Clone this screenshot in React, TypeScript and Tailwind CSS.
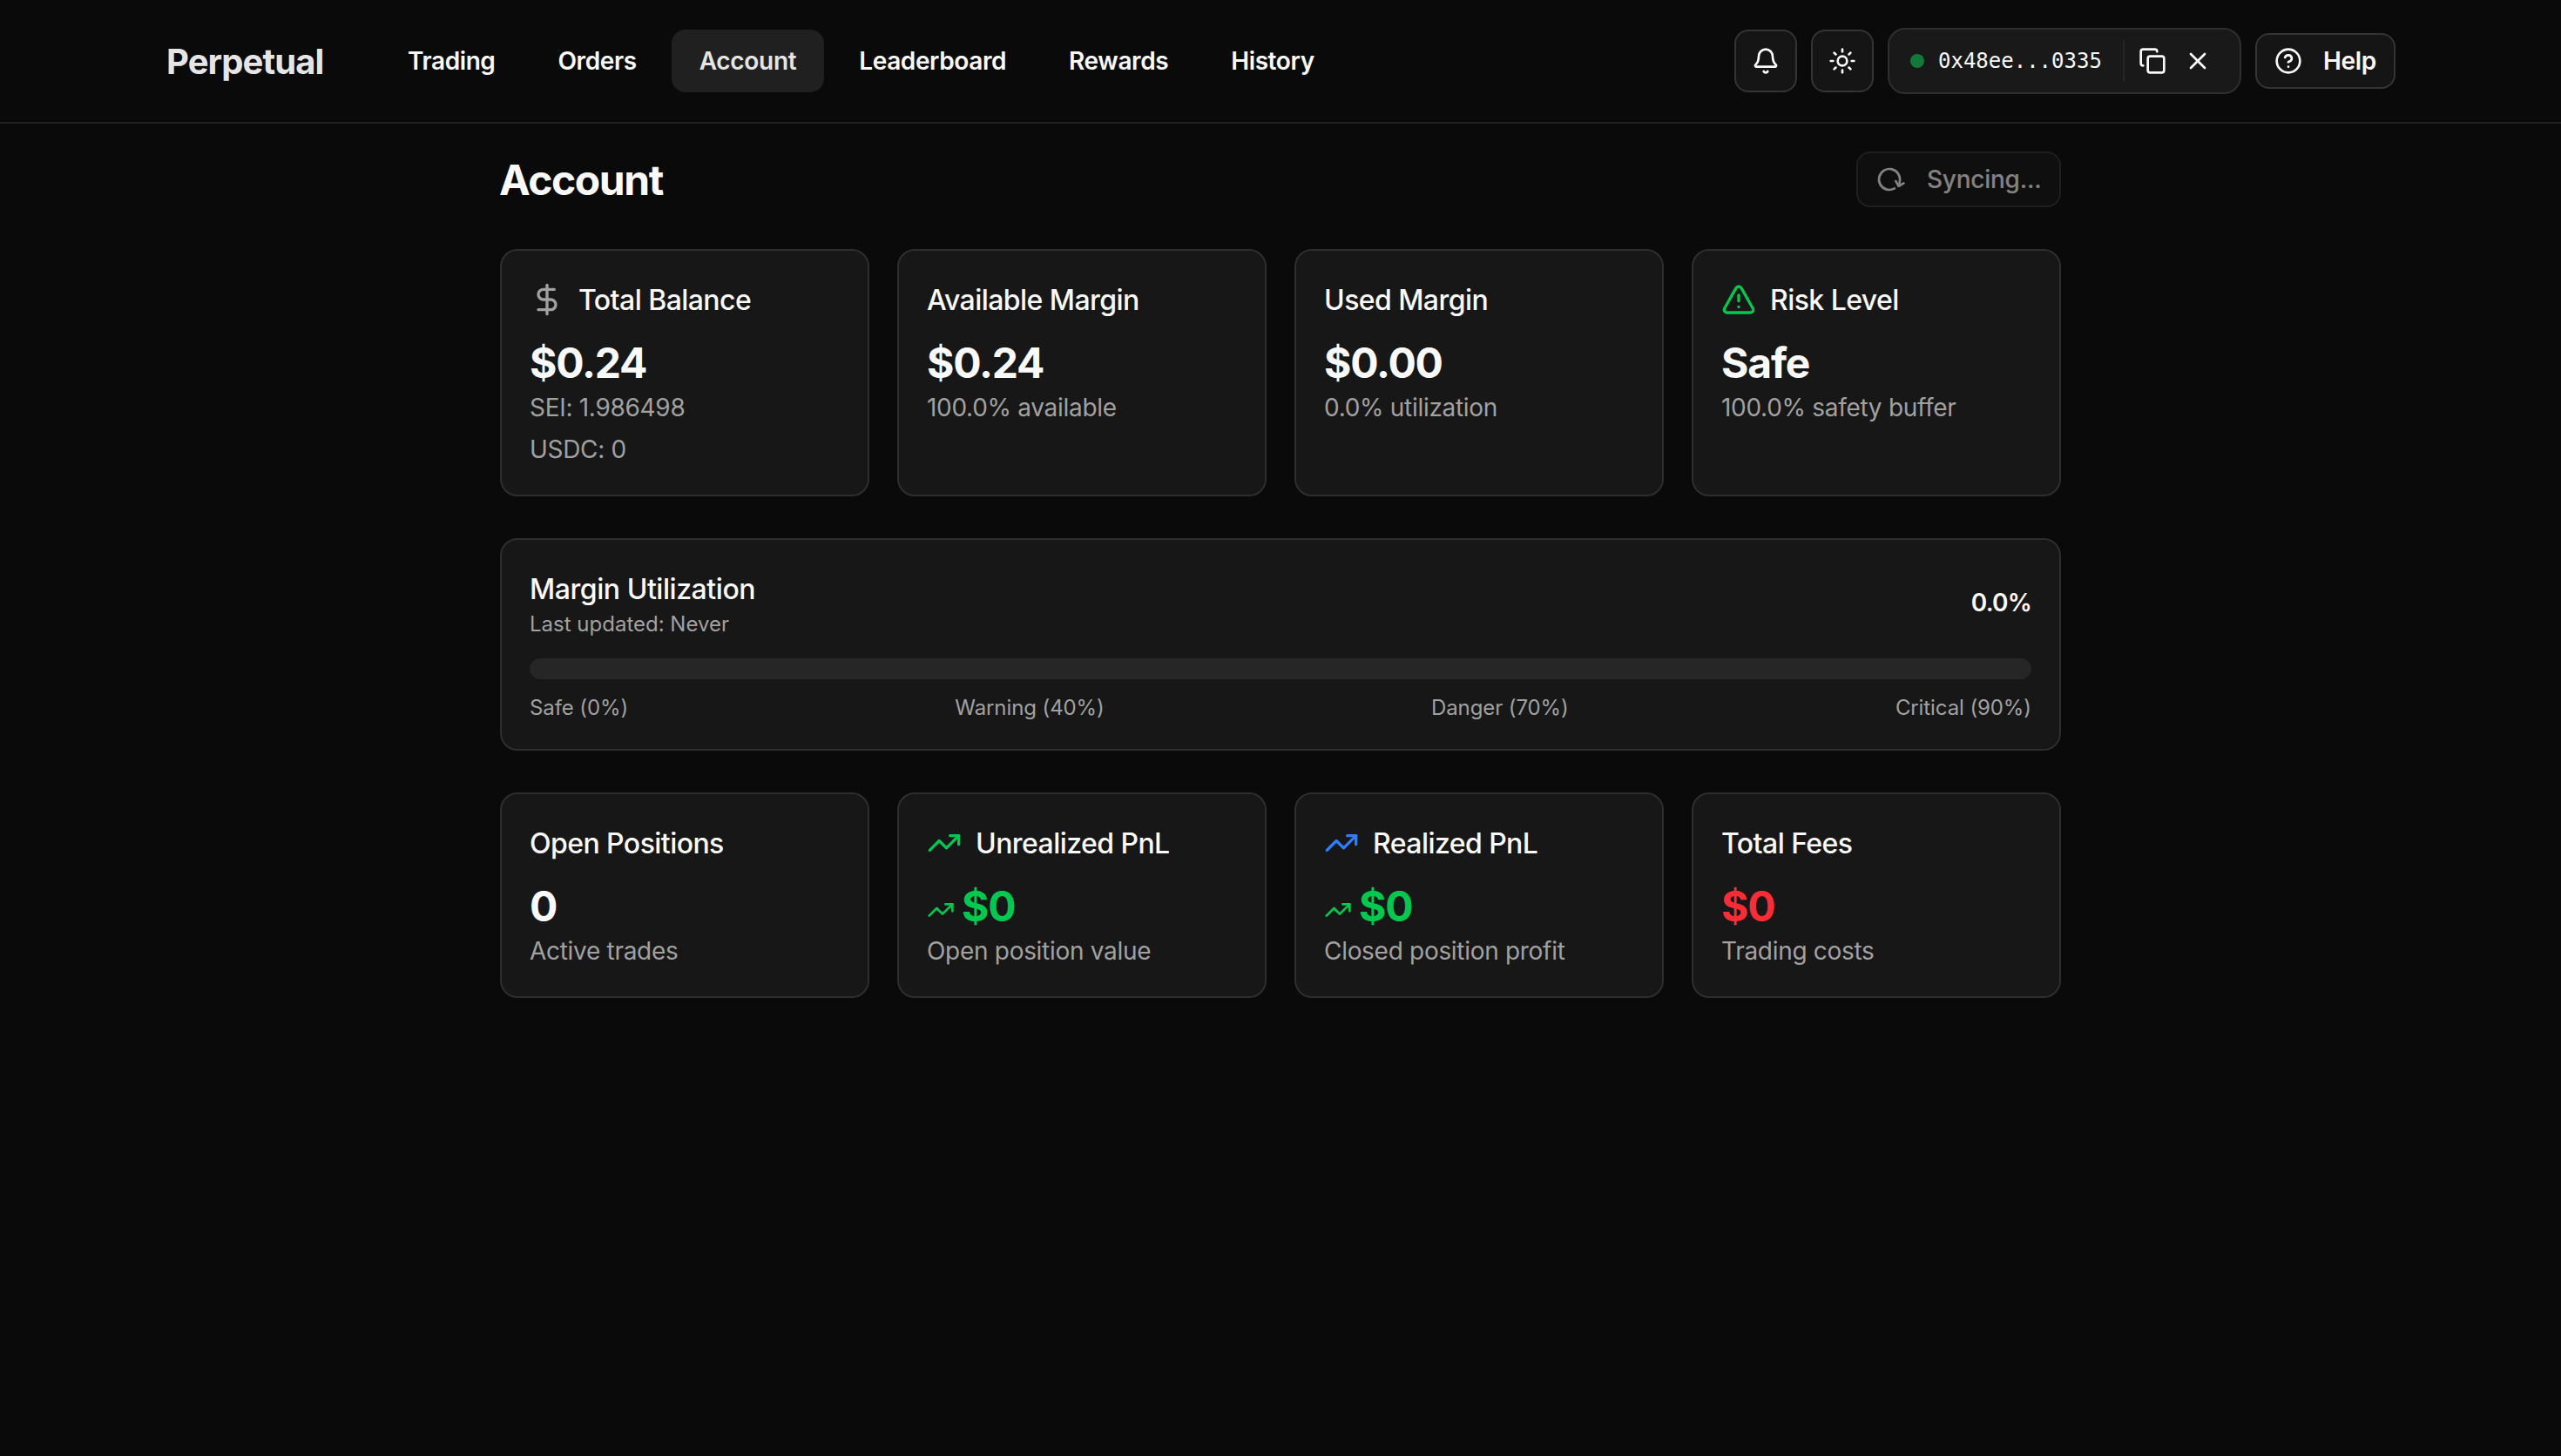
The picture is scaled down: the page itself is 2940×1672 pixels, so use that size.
import type { ReactNode } from 'react'
import {
  Bell,
  CircleQuestionMark,
  Copy,
  DollarSign,
  RotateCw,
  Sun,
  TrendingUp,
  TriangleAlert,
  X,
} from 'lucide-react'

const NAV_ITEMS = ['Trading', 'Orders', 'Account', 'Leaderboard', 'Rewards', 'History']
const THRESHOLDS = ['Safe (0%)', 'Warning (40%)', 'Danger (70%)', 'Critical (90%)']

interface StatCardProps {
  title: string
  value: string
  details: string[]
  icon?: ReactNode
  trend?: boolean
  valueClass?: string
}

function StatCard({ title, value, details, icon, trend, valueClass = 'text-neutral-50' }: StatCardProps) {
  return (
    <div className="bg-neutral-900 border-2 border-[#2e2e2e] rounded-[20px] p-8">
      <div className="flex items-center gap-4 h-12">
        {icon}
        <h3 className="pt-0.5 text-[32px] leading-[48px] font-medium tracking-[-0.56px]">{title}</h3>
      </div>
      <div className={`mt-4 flex items-center gap-2 h-16 ${valueClass}`}>
        {trend && <TrendingUp className="size-8 mt-2.5" />}
        <span className="pt-0.5 text-[48px] leading-[64px] font-bold tracking-[-1.2px]">{value}</span>
      </div>
      <div className="space-y-2">
        {details.map((d) => (
          <p key={d} className="text-[28px] leading-10 text-[#a1a1a1] tracking-[-0.3px]">
            {d}
          </p>
        ))}
      </div>
    </div>
  )
}

function Header() {
  return (
    <header className="h-[142px] border-b-2 border-[#222222]">
      <div className="w-[2560px] h-full mx-auto flex items-center justify-between">
        <div className="flex items-center gap-16">
          <span className="w-[182px] pt-0.5 pl-px text-[40px] font-bold tracking-[-0.9px] text-neutral-200">
            Perpetual
          </span>
          <nav className="flex items-center gap-2">
            {NAV_ITEMS.map((item) => (
              <a
                key={item}
                className={`h-[72px] px-8 flex items-center rounded-2xl text-[28px] font-semibold ${
                  item === 'Account'
                    ? 'bg-[#202020] text-neutral-200 tracking-[-0.3px]'
                    : 'text-neutral-50 tracking-[-0.4px]'
                }`}
              >
                {item}
              </a>
            ))}
          </nav>
        </div>

        <div className="flex items-center gap-4">
          <button className="size-[72px] flex items-center justify-center rounded-2xl border-2 border-[#343434] bg-[#151515]">
            <Bell className="size-8" />
          </button>
          <button className="size-[72px] flex items-center justify-center rounded-2xl border-2 border-[#343434] bg-[#151515]">
            <Sun className="size-8" />
          </button>
          <div className="w-[406px] h-[76px] pl-6 flex items-center rounded-[20px] border-2 border-[#2e2e2e] bg-[#191919]">
            <span className="size-4 rounded-full bg-[#117a37]" />
            <span className="ml-4 w-[188px] font-['DejaVu_Sans_Mono',monospace] text-[24px]">0x48ee...0335</span>
            <span className="ml-6 w-0.5 h-12 bg-[#262626]" />
            <Copy className="ml-4 size-8" />
            <X className="ml-5 size-8" />
          </div>
          <button className="w-[161px] h-16 px-5 flex items-center gap-6 rounded-2xl border-2 border-[#343434] bg-[#151515] text-[28px] font-semibold tracking-[-0.3px]">
            <CircleQuestionMark className="size-8 shrink-0" />
            Help
          </button>
        </div>
      </div>
    </header>
  )
}

function MarginUtilization() {
  return (
    <div className="bg-neutral-900 border-2 border-[#2e2e2e] rounded-[20px] p-8">
      <div className="flex items-center justify-between">
        <div>
          <h3 className="h-12 pt-px text-[32px] leading-[48px] font-medium tracking-[-0.45px]">
            Margin Utilization
          </h3>
          <p className="h-8 pt-px text-[24px] leading-8 text-[#a1a1a1]">Last updated: Never</p>
        </div>
        <span className="text-[28px] font-semibold tracking-[-0.8px]">0.0%</span>
      </div>
      <div className="mt-6 h-6 rounded-full bg-neutral-800" />
      <div className="mt-4 h-8 pt-px flex justify-between text-[24px] leading-8 text-[#a1a1a1] tracking-[-0.1px]">
        {THRESHOLDS.map((t) => (
          <span key={t}>{t}</span>
        ))}
      </div>
    </div>
  )
}

export default function App() {
  return (
    <div className="min-h-screen bg-neutral-950 text-neutral-50 font-[Inter,sans-serif]">
      <Header />
      <main className="w-[1792px] mx-auto py-8 flex flex-col gap-12">
        <div className="flex items-center justify-between h-16">
          <h1 className="-ml-px pt-0.5 text-[48px] leading-[64px] font-bold tracking-[-1.45px]">Account</h1>
          <button
            disabled
            className="w-[235px] h-16 px-5 flex items-center gap-[27px] rounded-2xl border-2 border-[#343434] bg-[#151515] text-[28px] font-medium tracking-[-0.25px] opacity-50"
          >
            <RotateCw className="size-8 shrink-0 rotate-60" />
            Syncing...
          </button>
        </div>

        <div className="grid grid-cols-4 gap-8">
          <StatCard
            title="Total Balance"
            value="$0.24"
            details={['SEI: 1.986498', 'USDC: 0']}
            icon={<DollarSign className="size-10 text-[#a1a1a1]" />}
          />
          <StatCard title="Available Margin" value="$0.24" details={['100.0% available']} />
          <StatCard title="Used Margin" value="$0.00" details={['0.0% utilization']} />
          <StatCard
            title="Risk Level"
            value="Safe"
            details={['100.0% safety buffer']}
            icon={<TriangleAlert className="size-10 text-[#00c950]" />}
          />
        </div>

        <MarginUtilization />

        <div className="grid grid-cols-4 gap-8">
          <StatCard title="Open Positions" value="0" details={['Active trades']} />
          <StatCard
            title="Unrealized PnL"
            value="$0"
            details={['Open position value']}
            icon={<TrendingUp className="size-10 text-[#00c950]" />}
            valueClass="text-[#00c950]"
            trend
          />
          <StatCard
            title="Realized PnL"
            value="$0"
            details={['Closed position profit']}
            icon={<TrendingUp className="size-10 text-[#2b7fff]" />}
            valueClass="text-[#00c950]"
            trend
          />
          <StatCard title="Total Fees" value="$0" details={['Trading costs']} valueClass="text-[#fb2c36]" />
        </div>
      </main>
    </div>
  )
}
